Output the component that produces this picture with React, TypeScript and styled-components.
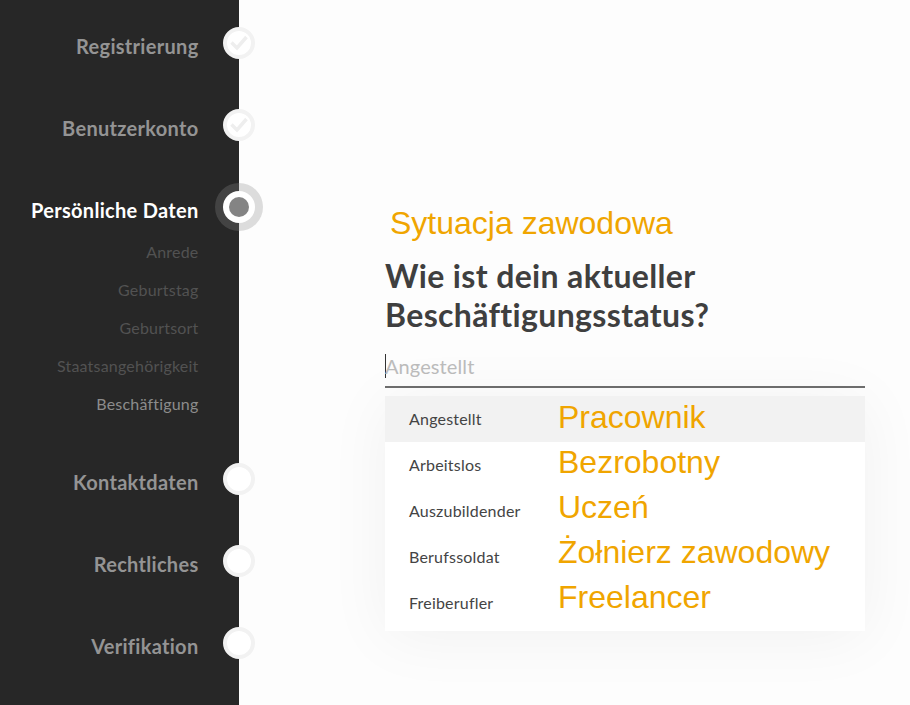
import React from "react";
import styled, { createGlobalStyle } from "styled-components";

const Global = createGlobalStyle`
  html, body { margin: 0; padding: 0; height: 100%; background: #fdfdfd; }
  #root { height: 100%; }
  * { box-sizing: border-box; }
`;

const Page = styled.div`
  display: flex;
  width: 910px;
  height: 705px;
  overflow: hidden;
  font-family: Lato, "Open Sans", sans-serif;
  background: #fdfdfd;
`;

const Sidebar = styled.nav`
  flex: 0 0 239px;
  background: #272727;
  padding-top: 1px;
  display: flex;
  flex-direction: column;
  position: relative;
  z-index: 1;
`;

const Step = styled.div`
  position: relative;
  height: 82px;
  display: flex;
  justify-content: flex-end;
  align-items: flex-start;
  padding: 32px 40.5px 0 0;
`;

const StepLabel = styled.span<{ $active?: boolean }>`
  font-size: 20px;
  line-height: 26px;
  font-weight: 700;
  letter-spacing: 0.3px;
  color: ${(p) => (p.$active ? "#ffffff" : "#949494")};
`;

const Dot = styled.span`
  position: absolute;
  left: 223px;
  top: 26px;
  width: 32px;
  height: 32px;
  border-radius: 50%;
  background: #fff;
  border: 4px solid #f2f2f2;
  display: flex;
  align-items: center;
  justify-content: center;
`;

const ActiveDot = styled.span`
  position: absolute;
  left: 215px;
  top: 18px;
  width: 48px;
  height: 48px;
  border-radius: 50%;
  background: rgba(140, 140, 140, 0.285);
  display: flex;
  align-items: center;
  justify-content: center;
  &::before {
    content: "";
    width: 32px;
    height: 32px;
    border-radius: 50%;
    background: #fff;
  }
  &::after {
    content: "";
    position: absolute;
    left: 14px;
    top: 14px;
    width: 20px;
    height: 20px;
    border-radius: 50%;
    background: #848484;
  }
`;

const SubList = styled.div`
  display: flex;
  flex-direction: column;
  margin-top: -14px;
  margin-bottom: 14px;
  padding-right: 40.5px;
`;

const SubItem = styled.div<{ $current?: boolean }>`
  height: 38px;
  line-height: 38px;
  text-align: right;
  font-size: 16px;
  letter-spacing: 0.2px;
  color: ${(p) => (p.$current ? "#8c8c8c" : "#525252")};
`;

const Main = styled.main`
  flex: 1;
  padding: 203px 45px 0 146px;
  display: flex;
  flex-direction: column;
`;

const Note = styled.div`
  font-family: "Liberation Sans", Arial, sans-serif;
  color: #f0a500;
`;

const Title = styled(Note)`
  font-size: 32px;
  line-height: 40px;
  padding-left: 5px;
`;

const Question = styled.h1`
  margin: 13px 0 0;
  font-size: 32px;
  line-height: 39px;
  font-weight: 700;
  letter-spacing: 0.35px;
  color: #3f3f3f;
`;

const InputField = styled.div`
  margin-top: 15px;
  height: 39px;
  padding-bottom: 4px;
  border-bottom: 2px solid #6e6e6e;
  display: flex;
  align-items: center;
  font-size: 20px;
  letter-spacing: 0.1px;
  color: #bcbcbc;
  &::before {
    content: "";
    width: 1px;
    height: 24px;
    margin-right: -1px;
    background: #333;
  }
`;

const Dropdown = styled.div`
  margin-top: 8px;
  background: #fff;
  box-shadow: 0 6px 60px rgba(0, 0, 0, 0.05);
  padding-bottom: 5px;
`;

const Option = styled.div<{ $selected?: boolean }>`
  height: 46px;
  padding-left: 24px;
  display: flex;
  align-items: center;
  background: ${(p) => (p.$selected ? "#f2f2f2" : "transparent")};
`;

const OptionLabel = styled.span`
  flex: 0 0 149px;
  font-size: 16px;
  line-height: 20px;
  padding-bottom: 1px;
  letter-spacing: 0.2px;
  color: #444;
`;

const OptionNote = styled(Note)<{ $lift: number }>`
  font-size: 32px;
  line-height: 36px;
  white-space: nowrap;
  margin-top: ${(p) => -p.$lift}px;
`;

const Check = () => (
  <svg width="18" height="18" viewBox="0 0 18 18" fill="none">
    <path d="M1.5 8.5 L7 14 L16.5 3" stroke="#eeeeee" strokeWidth="3.5" />
  </svg>
);

const options: [string, string][] = [
  ["Angestellt", "Pracownik"],
  ["Arbeitslos", "Bezrobotny"],
  ["Auszubildender", "Uczeń"],
  ["Berufssoldat", "Żołnierz zawodowy"],
  ["Freiberufler", "Freelancer"],
];

export default function App() {
  return (
    <Page>
      <Global />
      <Sidebar>
        <Step><StepLabel>Registrierung</StepLabel><Dot><Check /></Dot></Step>
        <Step><StepLabel>Benutzerkonto</StepLabel><Dot><Check /></Dot></Step>
        <Step><StepLabel $active>Persönliche Daten</StepLabel><ActiveDot /></Step>
        <SubList>
          <SubItem>Anrede</SubItem>
          <SubItem>Geburtstag</SubItem>
          <SubItem>Geburtsort</SubItem>
          <SubItem>Staatsangehörigkeit</SubItem>
          <SubItem $current>Beschäftigung</SubItem>
        </SubList>
        <Step><StepLabel>Kontaktdaten</StepLabel><Dot /></Step>
        <Step><StepLabel>Rechtliches</StepLabel><Dot /></Step>
        <Step><StepLabel>Verifikation</StepLabel><Dot /></Step>
      </Sidebar>
      <Main>
        <Title>Sytuacja zawodowa</Title>
        <Question>Wie ist dein aktueller<br />Beschäftigungsstatus?</Question>
        <InputField>Angestellt</InputField>
        <Dropdown>
          {options.map(([label, note], i) => (
            <Option key={label} $selected={i === 0}>
              <OptionLabel>{label}</OptionLabel>
              <OptionNote $lift={2 * (i + 2)}>{note}</OptionNote>
            </Option>
          ))}
        </Dropdown>
      </Main>
    </Page>
  );
}
